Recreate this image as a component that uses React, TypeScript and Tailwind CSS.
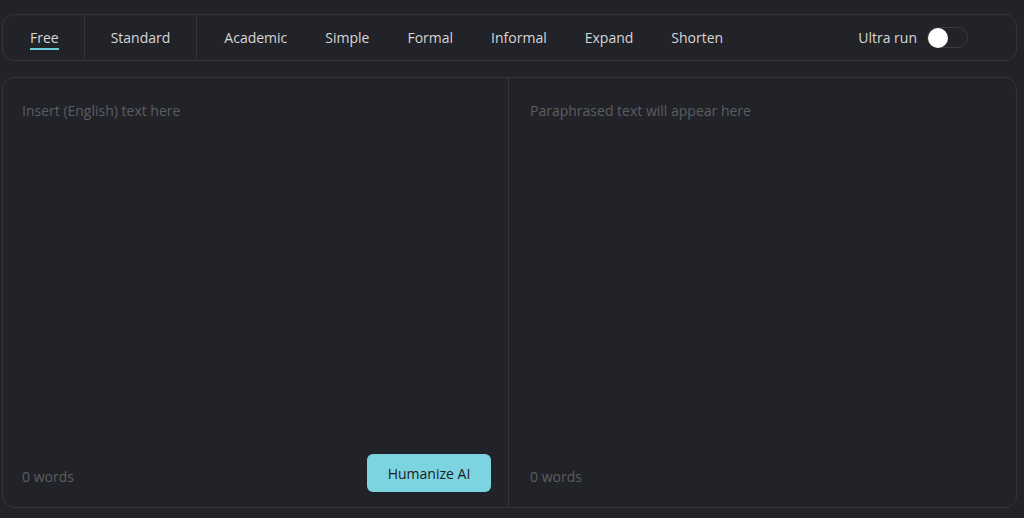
import React, { useState } from 'react';

const styleTabs = ['Academic', 'Simple', 'Formal', 'Informal', 'Expand', 'Shorten'];

const App: React.FC = () => {
  const [mode, setMode] = useState('Free');
  const [ultra, setUltra] = useState(false);
  const [input, setInput] = useState('');

  const words = input.trim() ? input.trim().split(/\s+/).length : 0;

  return (
    <div
      className="min-h-screen w-full bg-[#222328] pt-[14px] pl-[2px] pr-[7px] text-[14px] text-[#d6d6d8]"
      style={{ fontFamily: '"Open Sans", "Noto Sans", sans-serif' }}
    >
      {/* mode bar */}
      <div className="flex h-[47px] items-stretch rounded-[12px] border border-[#34353b] pr-[48px]">
        {['Free', 'Standard'].map((m, i) => (
          <button
            key={m}
            onClick={() => setMode(m)}
            className={`flex items-center border-r border-[#34353b] ${i === 0 ? 'pl-[27px] pr-[25px]' : 'px-[26px]'}`}
          >
            <span className="relative leading-5">
              {m}
              {mode === m && (
                <span className="absolute -bottom-[2px] left-0 right-0 h-[2px] bg-[#6fcbdc]" />
              )}
            </span>
          </button>
        ))}
        <div className="flex items-center gap-[38px] pl-[27px]">
          {styleTabs.map((m) => (
            <button key={m} onClick={() => setMode(m)} className="relative leading-5">
              {m}
              {mode === m && (
                <span className="absolute -bottom-[2px] left-0 right-0 h-[2px] bg-[#6fcbdc]" />
              )}
            </button>
          ))}
        </div>
        <div className="ml-auto flex items-center gap-[10px]">
          <span className="leading-5">Ultra run</span>
          <button
            onClick={() => setUltra(!ultra)}
            className={`flex h-[21px] w-[41px] items-center rounded-full border border-[#3a3b41] ${
              ultra ? 'justify-end bg-[#6fcbdc]' : 'justify-start bg-transparent'
            }`}
          >
            <span className="h-[20px] w-[20px] rounded-full bg-white" />
          </button>
        </div>
      </div>

      {/* editor panels */}
      <div className="mt-[16px] flex h-[431px] rounded-[12px] border border-[#34353b]">
        <div className="flex w-[506px] flex-col border-r border-[#34353b] pl-[19px] pr-[17px] pt-[23px] pb-[15px]">
          <textarea
            value={input}
            onChange={(e) => setInput(e.target.value)}
            placeholder="Insert (English) text here"
            className="flex-1 resize-none bg-transparent leading-5 text-[#d6d6d8] outline-none placeholder:text-[#5c5d62]"
          />
          <div className="flex items-end justify-between">
            <span className="mb-[5px] leading-5 text-[#5c5d62]">{words} words</span>
            <button className="h-[38px] w-[124px] rounded-[6px] bg-[#7dd4e1] text-[#1b1c20]">
              Humanize AI
            </button>
          </div>
        </div>
        <div className="flex flex-1 flex-col pl-[21px] pt-[23px] pb-[20px]">
          <div className="flex-1 leading-5 text-[#5c5d62]">Paraphrased text will appear here</div>
          <div className="leading-5 text-[#5c5d62]">0 words</div>
        </div>
      </div>
    </div>
  );
};

export default App;
